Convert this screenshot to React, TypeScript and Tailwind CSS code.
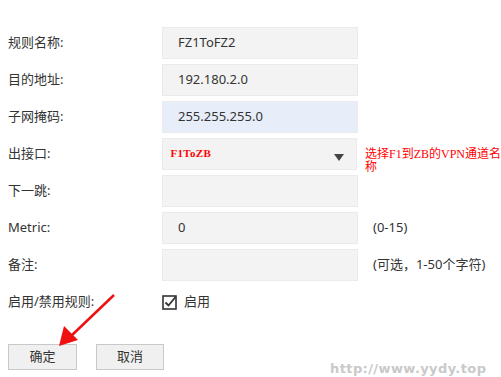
import type { ReactNode } from "react";

const FONT = { fontFamily: '"Noto Sans", "Noto Sans CJK SC", sans-serif' };

function Row({
  label,
  children,
  note,
}: {
  label: string;
  children: ReactNode;
  note?: ReactNode;
}) {
  return (
    <div className="flex h-[32px] items-center">
      <div className="w-[154px] text-[13px] text-[#333]">{label}</div>
      {children}
      {note}
    </div>
  );
}

function Box({
  value,
  blue = false,
}: {
  value?: string;
  blue?: boolean;
}) {
  return (
    <div
      className={`flex h-[32px] w-[196px] items-center border border-[#ebebeb] px-[15px] text-[13px] text-[#333] ${
        blue ? "bg-[#e8eef9]" : "bg-[#f3f3f3]"
      }`}
    >
      {value}
    </div>
  );
}

export default function App() {
  return (
    <div
      className="relative h-[377px] w-[501px] overflow-hidden bg-white"
      style={FONT}
    >
      <div className="flex flex-col gap-[5px] pl-[8px] pt-[27px]">
        <Row label="规则名称:">
          <Box value="FZ1ToFZ2" />
        </Row>
        <Row label="目的地址:">
          <Box value="192.180.2.0" />
        </Row>
        <Row label="子网掩码:">
          <Box value="255.255.255.0" blue />
        </Row>
        <Row
          label="出接口:"
          note={
            <div
              className="ml-[8px] self-start whitespace-nowrap pt-[10px] text-[12px] leading-[13px] text-[#ff0000]"
              style={{ fontFamily: '"Liberation Serif", "Noto Sans CJK SC", serif' }}
            >
              选择F1到ZB的VPN通道名
              <br />
              称
            </div>
          }
        >
          <div className="flex h-[32px] w-[196px] items-start justify-between border border-[#ebebeb] bg-[#f3f3f3] pl-[8px] pr-[12px] pt-[6px]">
            <span
              className="text-[11px] font-bold tracking-[0.3px] text-[#ff0000]"
              style={{ fontFamily: '"Liberation Serif", serif' }}
            >
              F1ToZB
            </span>
            <svg width="10" height="7" viewBox="0 0 10 7" className="mt-[9px]">
              <path d="M0 0 L10 0 L5 7 Z" fill="#444" />
            </svg>
          </div>
        </Row>
        <Row label="下一跳:">
          <Box />
        </Row>
        <Row
          label="Metric:"
          note={<span className="ml-[15px] text-[13px] text-[#333]">(0-15)</span>}
        >
          <Box value="0" />
        </Row>
        <Row
          label="备注:"
          note={
            <span className="ml-[15px] text-[13px] text-[#333]">
              (可选，1-50个字符)
            </span>
          }
        >
          <Box />
        </Row>
        <div className="flex h-[32px] items-center">
          <div className="w-[154px] text-[13px] text-[#333]">启用/禁用规则:</div>
          <div className="flex items-center gap-[7px]">
            <svg width="15" height="15" viewBox="0 0 15 15">
              <rect x="1" y="1" width="13" height="13" fill="white" stroke="#333" strokeWidth="1.6" />
              <path d="M3.5 7.5 L6.5 10.5 L13.5 2" fill="none" stroke="#333" strokeWidth="1.8" />
            </svg>
            <span className="text-[13px] text-[#333]">启用</span>
          </div>
        </div>
        <div className="mt-[21px] flex gap-[19px]">
          <button className="h-[26px] w-[69px] border border-[#c8c8c8] bg-[#f0f0f0] text-[13px] text-[#333]">
            确定
          </button>
          <button className="h-[26px] w-[68px] border border-[#c8c8c8] bg-[#f0f0f0] text-[13px] text-[#333]">
            取消
          </button>
        </div>
      </div>

      <svg
        className="absolute left-0 top-0"
        width="501"
        height="377"
        viewBox="0 0 501 377"
      >
        <line x1="114" y1="295" x2="70" y2="337" stroke="#ee1111" strokeWidth="2.5" />
        <path d="M59 346 L64 326 L78 340 Z" fill="#ee1111" />
      </svg>

      <div
        className="absolute left-[330px] top-[359px] text-[13px] font-bold tracking-[0.4px] text-[#c9c9c9]"
        style={{ fontFamily: '"DejaVu Sans", sans-serif' }}
      >
        http://www.yydy.top
      </div>
    </div>
  );
}
